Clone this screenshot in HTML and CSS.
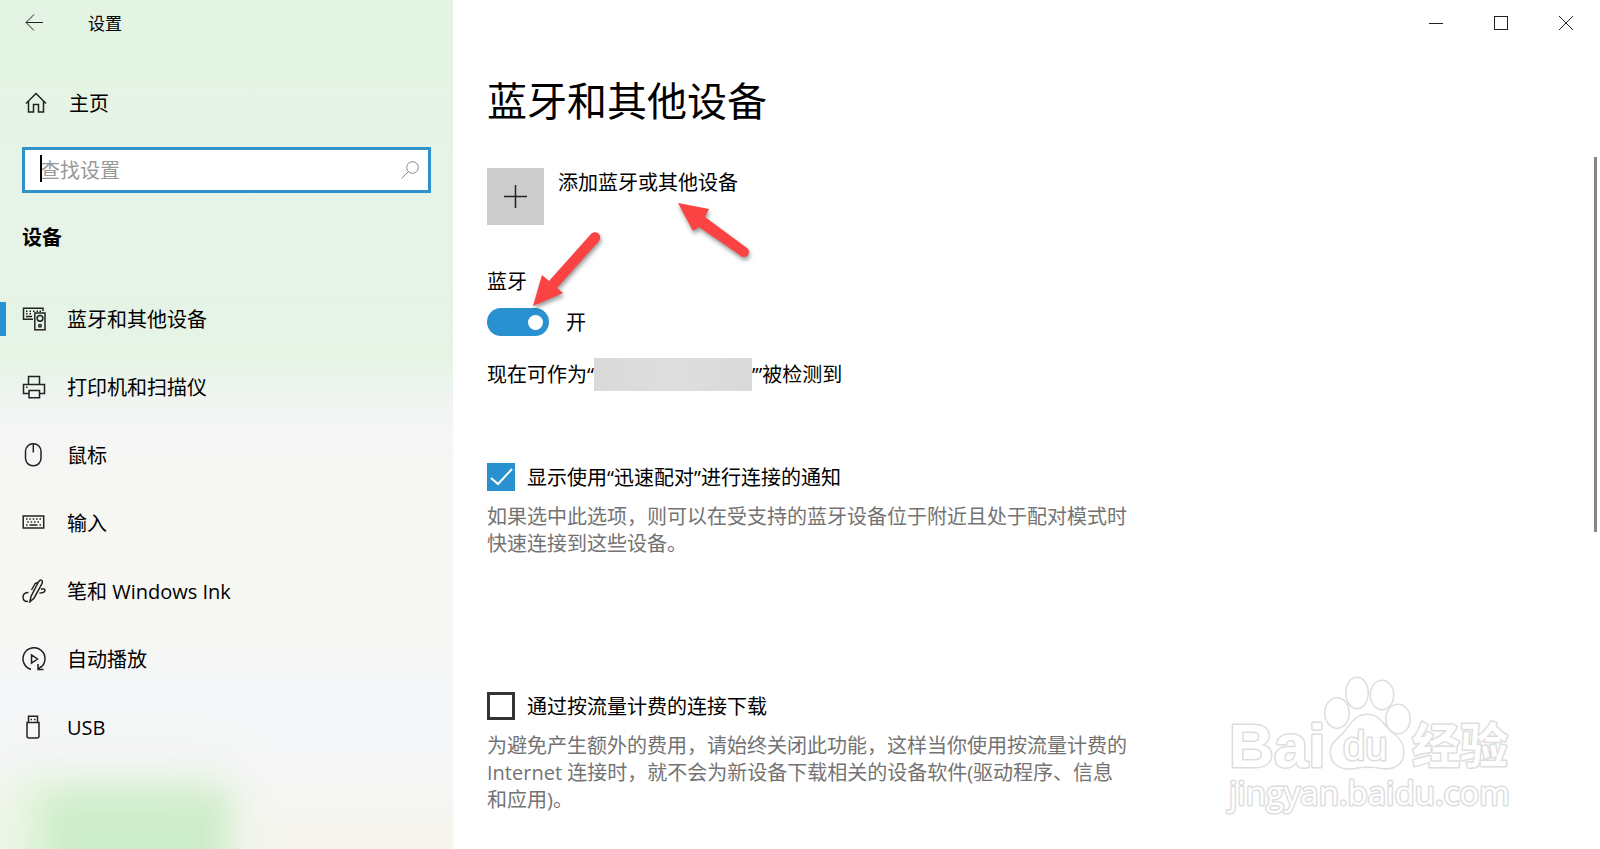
FILE: index.html
```html
<!DOCTYPE html>
<html lang="zh-CN">
<head>
    <meta charset="UTF-8">
    <meta name="viewport" content="width=device-width, initial-scale=1.0">
    <title>设置</title>
    <link rel="stylesheet" href="styles.css">
</head>
<body>
    <div class="window">
        <aside class="sidebar">
            <div class="sidebar-top">
                <button type="button" class="back-button" aria-label="返回">
                    <svg width="20" height="18" viewBox="0 0 20 18"><path d="M1 8.500H18M9 0.500L1 8.500L9 16.500"/></svg>
                </button>
                <span class="app-title">设置</span>
            </div>
            <a href="#" class="home-link">
                <svg width="24" height="24" viewBox="0 0 24 24"><path class="thick" d="M2 12.500L12 2.500L22 12.500M4.500 10.500V21H9.500V13.500H14.500V21H19.500V10.500"/></svg>
                主页
            </a>
            <div class="search">
                <input type="text" class="search-input" placeholder="查找设置" aria-label="查找设置">
                <span class="caret"></span>
                <svg class="search-icon" width="20" height="20" viewBox="0 0 20 20"><circle cx="12.500" cy="7.500" r="5.800"/><path d="M8.400 11.600L1.500 18.500"/></svg>
            </div>
            <h2 class="section-title">设备</h2>
            <nav class="nav">
                <a href="#" class="nav-item active">
                    <svg width="24" height="24" viewBox="0 0 24 24">
                        <path class="thick" d="M11 12.200H1.500V1.200H21V4M4 4.200H5.500M7.500 4.200H9M11 4.200H12.500M14.500 4.200H16M17.500 4.200H19M4 6.800H5.500M7.500 6.800H9M4 9.500H10"/>
                        <rect class="thick" x="12.800" y="6" width="10.200" height="16.800"/>
                        <circle class="thick" cx="18" cy="11.300" r="2.900"/><circle class="thick" cx="18" cy="18.800" r="1.300"/>
                    </svg>
                    蓝牙和其他设备
                </a>
                <a href="#" class="nav-item">
                    <svg width="24" height="24" viewBox="0 0 24 24"><path class="thick" d="M6.500 9.500V1.500H17.500V9.500M6.500 18.500H1.500V9.500H22.500V18.500H17.500M7 15.500H17.500V22.800H7ZM4 12.300H5.500"/></svg>
                    打印机和扫描仪
                </a>
                <a href="#" class="nav-item">
                    <svg width="24" height="24" viewBox="0 0 24 24"><rect class="thick" x="3.500" y="0.800" width="15.500" height="22" rx="7.500"/><path class="thick" d="M11.300 1V9.500"/></svg>
                    鼠标
                </a>
                <a href="#" class="nav-item">
                    <svg width="24" height="24" viewBox="0 0 24 24"><rect class="thick" x="1.200" y="5" width="20.500" height="12"/><path class="thick" d="M4 8H5.500M7.300 8H8.800M10.700 8H12.200M14 8H15.500M17.500 8H19M5.300 11H6.800M8.700 11H10.200M12 11H13.500M15.500 11H17M4 14H5.500M7.500 14H15.500M17.500 14H19"/></svg>
                    输入
                </a>
                <a href="#" class="nav-item">
                    <svg width="24" height="24" viewBox="0 0 24 24"><path class="thick" d="M7.800 22.800L9 17.500L16.200 3.500Q17.800 0.200 19.600 1.400Q21.200 2.400 19.700 5.200L12 19.200ZM16.300 3.300L13.200 4.500L9.500 11M6.500 13.500Q1 13.500 1 18.300Q1.300 23 6 22.300M19 10.200Q23 9 23 11.300Q22.500 14 17.500 14"/></svg>
                    笔和 Windows Ink
                </a>
                <a href="#" class="nav-item">
                    <svg width="24" height="24" viewBox="0 0 24 24"><path class="thick" d="M9 22.300A11 11 0 1 1 19 20.200M16 17V22.500H21.500M16 22.500L19 19.500M9.500 8V16L15.500 12Z"/></svg>
                    自动播放
                </a>
                <a href="#" class="nav-item">
                    <svg width="24" height="24" viewBox="0 0 24 24"><path class="thick" d="M6.500 7.500V1.200H15.500V7.500M5 7.500H17V21Q17 23 15 23H7Q5 23 5 21ZM8.500 4.500H10M12 4.500H13.500"/></svg>
                    USB
                </a>
            </nav>
        </aside>

        <main class="main">
            <div class="window-controls">
                <button type="button" aria-label="最小化"><svg width="16" height="16" viewBox="0 0 16 16"><path d="M1 8.500H15"/></svg></button>
                <button type="button" aria-label="最大化"><svg width="16" height="16" viewBox="0 0 16 16"><rect x="1.500" y="1.500" width="13" height="13"/></svg></button>
                <button type="button" aria-label="关闭"><svg width="16" height="16" viewBox="0 0 16 16"><path d="M1 1L15 15M15 1L1 15"/></svg></button>
            </div>

            <div class="content">
                <h1>蓝牙和其他设备</h1>
                <button type="button" class="add-device">
                    <span class="add-icon"><svg width="23" height="23" viewBox="0 0 23 23"><path class="thick" d="M11.500 0V23M0 11.500H23"/></svg></span>
                    <span class="add-text">添加蓝牙或其他设备</span>
                </button>

                <label class="toggle-title" for="bluetooth">蓝牙</label>
                <div class="toggle-row">
                    <input type="checkbox" class="toggle" id="bluetooth" checked>
                    <span>开</span>
                </div>
                <p class="status">现在可作为“<span class="device-name"></span>’”被检测到</p>

                <div class="option">
                    <label class="check-row"><input type="checkbox" class="check" checked>显示使用“迅速配对”进行连接的通知</label>
                    <p class="hint">如果选中此选项，则可以在受支持的蓝牙设备位于附近且处于配对模式时快速连接到这些设备。</p>
                </div>
                <div class="option">
                    <label class="check-row"><input type="checkbox" class="check">通过按流量计费的连接下载</label>
                    <p class="hint">为避免产生额外的费用，请始终关闭此功能，这样当你使用按流量计费的 Internet 连接时，就不会为新设备下载相关的设备软件(驱动程序、信息和应用)。</p>
                </div>
            </div>

            <!-- pointers over the add button and the toggle -->
            <svg class="arrows" width="240" height="130" viewBox="0 0 240 130">
                <path d="M158 13L189 19L185 27L227 58A5 5 0 0 1 221 66L179 37L173 41Z"/>
                <path d="M13 116L22 85L29 91L71 44A5 5 0 0 1 79 51L37 98L43 103Z"/>
            </svg>

            <svg class="watermark" width="300" height="150" viewBox="0 0 300 150">
                <text class="wm-bold" x="9" y="97">Bai</text>
                <ellipse cx="137" cy="23" rx="10.500" ry="15"/>
                <ellipse cx="162" cy="25" rx="11" ry="14"/>
                <ellipse cx="117" cy="43" rx="11.500" ry="14.500"/>
                <ellipse cx="178" cy="49" rx="11.500" ry="14"/>
                <path d="M147 45C160 45 163 56 172 63C180 69 184 75 183 84C182 95 173 99 163 98C153 96 143 96 134 98C120 100 111 93 111 82C111 73 118 70 125 62C131 54 136 45 147 45Z"/>
                <text class="wm-du" x="123" y="90">du</text>
                <text class="wm-cjk" x="192" y="93">经验</text>
                <text class="wm-url" x="9" y="135">jingyan.baidu.com</text>
            </svg>
            <div class="scrollbar"></div>
        </main>
    </div>
</body>
</html>
```
FILE: styles.css
```css
* {
    box-sizing: border-box;
}
body {
    margin: 0;
    font-family: "Open Sans", "Noto Sans CJK SC", sans-serif;
    font-size: 20px;
    line-height: 27px;
    color: #000;
    background-color: #fff;
}
h1, h2, p {
    margin: 0;
}
a {
    color: inherit;
    text-decoration: none;
}
button {
    padding: 0;
    border: none;
    background: none;
    font: inherit;
    color: inherit;
    cursor: pointer;
}
svg {
    display: block;
    flex: none;
    fill: none;
    stroke: #222;
    stroke-width: 1;
}
.thick {
    stroke-width: 1.5;
}
.window {
    display: flex;
    min-height: 100vh;
}

/* sidebar */
.sidebar {
    position: relative;
    flex: 0 0 453px;
    overflow: hidden;
    background: linear-gradient(#e3f3e4 0%, #e3f4e3 6%, #e7f3e9 22%, #e5f4e5 42%, #eef4ef 46%, #f5f6f5 51%, #f6f6f2 60%, #f7f7f3 73%, #f5f6f7 80%, #f5f6f7 89%, #f6f5f0 97%);
}
.sidebar::after {
    content: "";
    position: absolute;
    left: 44px;
    bottom: -60px;
    width: 186px;
    height: 118px;
    background: #cdecca;
    box-shadow: -20px 4px 30px 16px #e2f5da;
    filter: blur(16px);
}
.sidebar-top {
    display: flex;
    align-items: center;
    gap: 43px;
    height: 46px;
    padding-left: 25px;
}
.app-title {
    font-size: 17px;
}
.home-link {
    display: flex;
    align-items: center;
    gap: 21px;
    height: 48px;
    margin-top: 33px;
    padding-left: 24px;
}
.search {
    position: relative;
    margin: 20px 22px 0;
}
.search-input {
    display: block;
    width: 100%;
    height: 46px;
    padding: 0 44px 0 15px;
    border: 3px solid #2f92c8;
    outline: none;
    background: #fff;
    font: inherit;
}
.search-input::placeholder {
    color: #999;
}
.caret {
    position: absolute;
    left: 18px;
    top: 8px;
    width: 2px;
    height: 27px;
    background: #000;
}
.search-icon {
    position: absolute;
    right: 11px;
    top: 13px;
    stroke: #888;
}
.section-title {
    margin: 30px 22px 32px;
    font-size: 20px;
    line-height: 30px;
}
.nav {
    display: flex;
    flex-direction: column;
}
.nav-item {
    position: relative;
    display: flex;
    align-items: center;
    gap: 21px;
    height: 68px;
    padding-left: 22px;
}
.nav-item.active::before {
    content: "";
    position: absolute;
    left: 0;
    top: 17px;
    width: 6px;
    height: 34px;
    background: #2991cf;
}

/* main area */
.main {
    position: relative;
    flex: 1;
    min-width: 0;
}
.window-controls {
    display: flex;
    justify-content: flex-end;
    height: 46px;
    padding-right: 2px;
}
.window-controls button {
    display: flex;
    align-items: center;
    justify-content: center;
    width: 65px;
}
.content {
    max-width: 680px;
    padding: 28px 0 22px 34px;
}
h1 {
    font-size: 40px;
    font-weight: 400;
    line-height: 54px;
}
.add-device {
    display: flex;
    align-items: flex-start;
    gap: 14px;
    margin-top: 40px;
}
.add-icon {
    display: flex;
    align-items: center;
    justify-content: center;
    width: 57px;
    height: 57px;
    background: #ccc;
}
.add-text {
    line-height: 30px;
}
.toggle-title {
    display: block;
    margin-top: 43px;
}
.toggle-row {
    display: flex;
    align-items: center;
    gap: 17px;
    height: 28px;
    margin-top: 13px;
}
.toggle {
    display: flex;
    align-items: center;
    justify-content: flex-end;
    appearance: none;
    width: 62px;
    height: 28px;
    margin: 0;
    padding-right: 6px;
    border-radius: 14px;
    background: #2991cf;
}
.toggle::after {
    content: "";
    width: 15px;
    height: 15px;
    border-radius: 50%;
    background: #fff;
}
.status {
    display: flex;
    align-items: center;
    height: 33px;
    margin-top: 22px;
}
.device-name {
    width: 158px;
    height: 33px;
    background: linear-gradient(90deg, #d9d9d9, #dedede 50%, #d9d9d9);
}
.option {
    margin-top: 72px;
}
.option + .option {
    margin-top: 135px;
}
.check-row {
    display: flex;
    align-items: center;
    gap: 12px;
    height: 28px;
}
.check {
    appearance: none;
    width: 28px;
    height: 28px;
    margin: 0;
    border: 3px solid #333;
    background: #fff;
}
.check:checked {
    border: none;
    background: #2991cf url("data:image/svg+xml,%3Csvg xmlns='http://www.w3.org/2000/svg' viewBox='0 0 28 28'%3E%3Cpath d='M4 15L11 21L25 6' fill='none' stroke='white' stroke-width='2'/%3E%3C/svg%3E");
}
.hint {
    margin-top: 12px;
    color: #737373;
}

/* overlays */
.arrows {
    position: absolute;
    left: 67px;
    top: 190px;
    fill: #fb4343;
    stroke: none;
    filter: drop-shadow(1px 3px 2px rgba(0, 0, 0, 0.4));
    pointer-events: none;
}
.watermark {
    position: absolute;
    right: 80px;
    bottom: 29px;
    fill: #fff;
    stroke: #ddd;
    stroke-width: 3;
    stroke-linejoin: round;
    paint-order: stroke;
    pointer-events: none;
}
.wm-bold {
    font: bold 62px "Liberation Sans", sans-serif;
}
.wm-du {
    font: 40px "Liberation Sans", sans-serif;
}
.wm-cjk {
    font: bold 48px "Noto Sans CJK SC", sans-serif;
}
.wm-url {
    font: 33px "Open Sans", sans-serif;
}
.scrollbar {
    position: absolute;
    right: 3px;
    top: 157px;
    width: 3px;
    height: 375px;
    background: #858585;
}
```
